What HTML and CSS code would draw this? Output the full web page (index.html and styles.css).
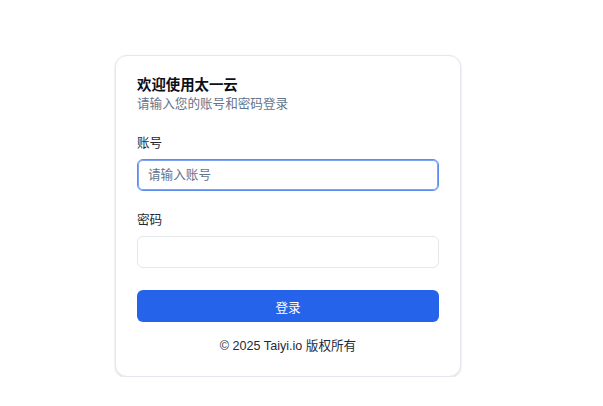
FILE: index.html
```html
<!DOCTYPE html>
<html lang="zh-CN">
<head>
<meta charset="utf-8">
<title>登录 - 太一云</title>
<link rel="stylesheet" href="styles.css">
</head>
<body>
<main class="page">
  <section class="card">
    <header class="card-head">
      <h1 class="title">欢迎使用太一云</h1>
      <p class="subtitle">请输入您的账号和密码登录</p>
    </header>
    <form class="form">
      <div class="field">
        <label class="label" for="account">账号</label>
        <input class="input input-focus" id="account" type="text" placeholder="请输入账号">
      </div>
      <div class="field">
        <label class="label" for="password">密码</label>
        <input class="input" id="password" type="password">
      </div>
      <button class="btn" type="button">登录</button>
    </form>
    <p class="footer">© 2025 Taiyi.io 版权所有</p>
  </section>
</main>
</body>
</html>
```

FILE: styles.css
```css
* { box-sizing: border-box; }
html, body { margin: 0; padding: 0; background: #ffffff; }
body {
  font-family: "Liberation Sans", "Noto Sans CJK SC", sans-serif;
  color: #111827;
}
.page {
  padding: 55px 0 0 115px;
}
.card {
  width: 346px;
  border: 1px solid #e5e7ee;
  border-radius: 12px;
  background: #fff;
  padding: 20px 21px 21px;
  box-shadow: 0 1px 3px rgba(0,0,0,0.09), 0 1px 2px rgba(0,0,0,0.05);
}
.title {
  margin: 0;
  font-size: 14.4px;
  line-height: 19px;
  font-weight: 700;
  color: #0b0f19;
}
.subtitle {
  margin: 0;
  font-size: 12.6px;
  line-height: 18px;
  color: #64748b;
}
.form {
  margin-top: 21px;
  display: flex;
  flex-direction: column;
}
.field {
  display: flex;
  flex-direction: column;
  gap: 7px;
  margin-bottom: 20px;
}
.field + .field { margin-bottom: 22px; }
.label {
  font-size: 12.6px;
  line-height: 18px;
  color: #1f2937;
}
.input {
  height: 32px;
  width: 100%;
  border: 1px solid #e5e7eb;
  border-radius: 6px;
  padding: 0 10px;
  font-family: inherit;
  font-size: 12.6px;
  color: #111827;
  background: #fff;
  outline: none;
}
.input::placeholder { color: #64748b; }
.input-focus {
  border-color: #5d8bf0;
  box-shadow: inset 0 0 0 1px #7ea2f3;
}
.btn {
  height: 32px;
  width: 100%;
  border: none;
  border-radius: 6px;
  background: #2563eb;
  color: #fff;
  font-family: inherit;
  font-size: 12.6px;
}
.footer {
  margin: 15px 0 0;
  text-align: center;
  font-size: 12.6px;
  line-height: 18px;
  color: #1f2937;
}
```
